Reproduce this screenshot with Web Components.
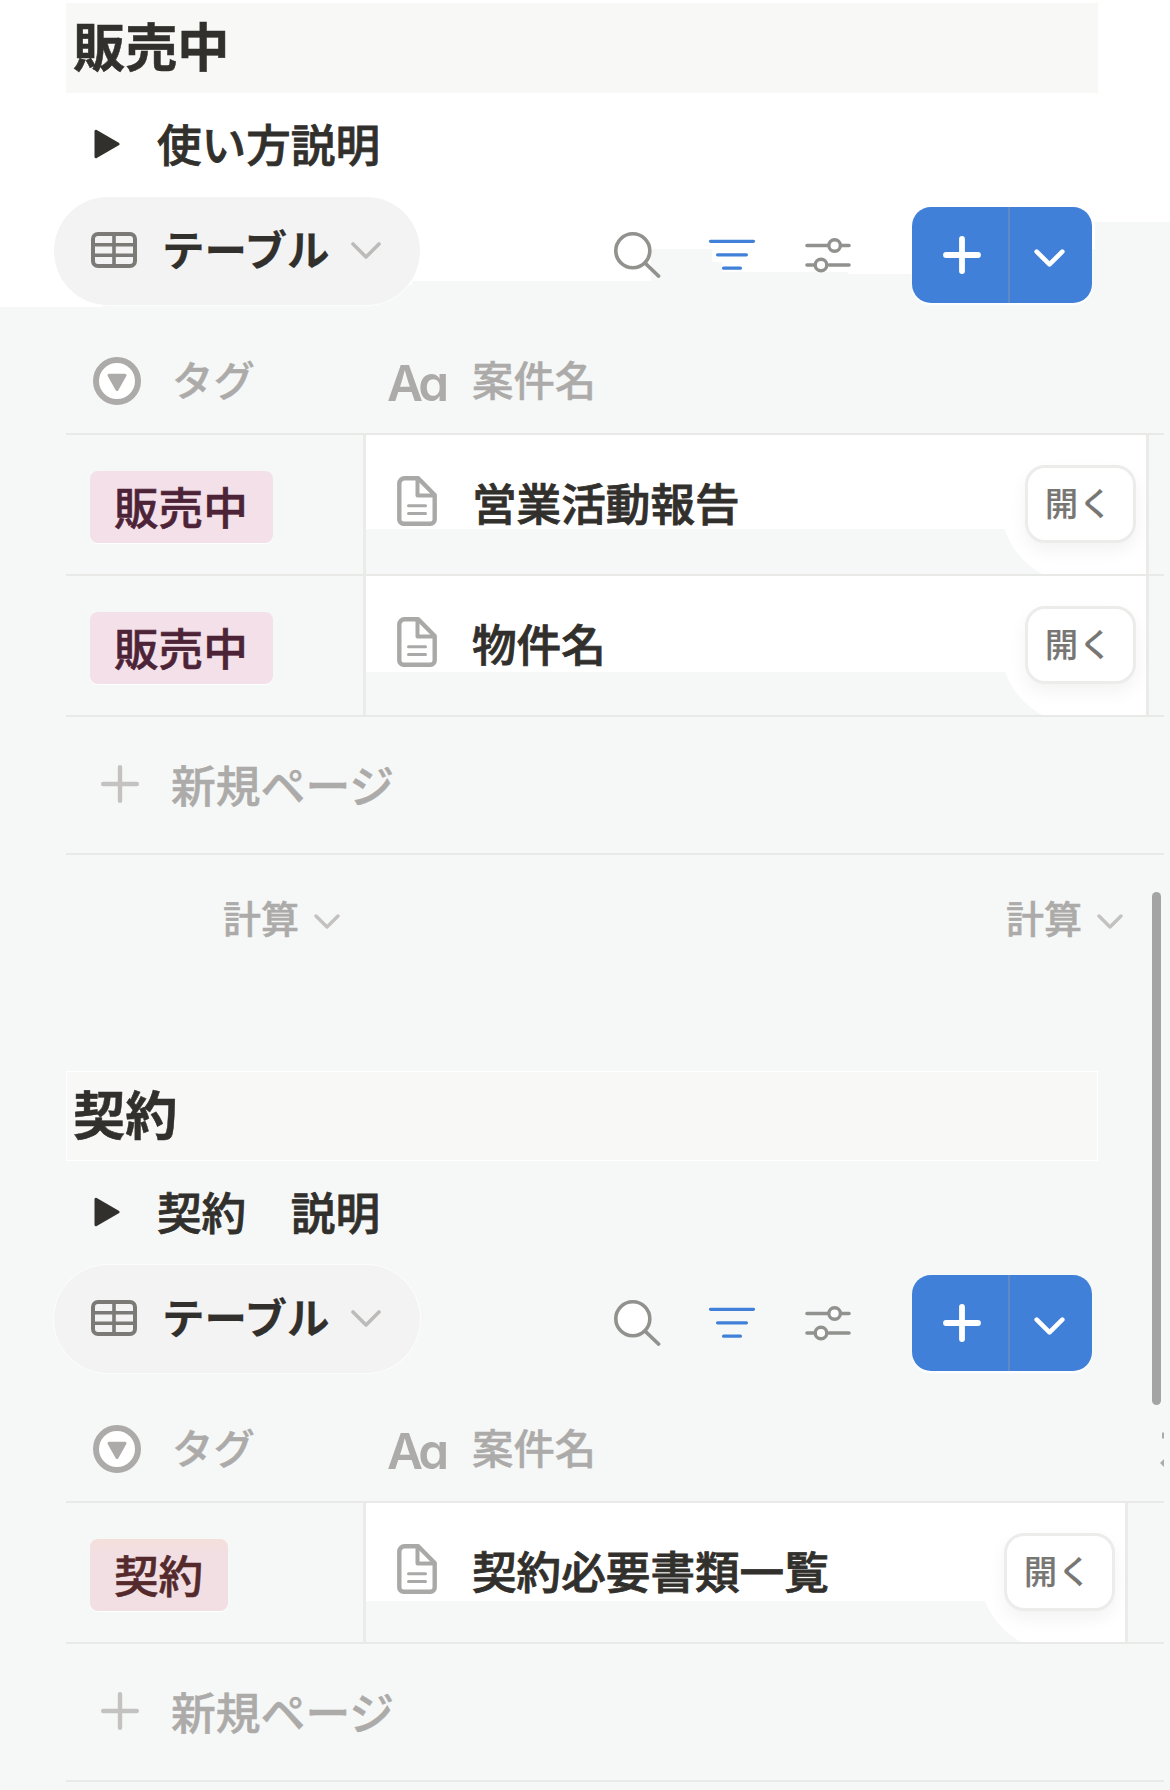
<!DOCTYPE html>
<html lang="ja">
<head>
<meta charset="utf-8">
<title>販売中</title>
<style>
  body {
    margin: 0;
    width: 1170px;
    height: 1790px;
    overflow: hidden;
    font-family: "Noto Sans CJK JP", sans-serif;
    color: #32302c;
    font-weight: 500;
    /* a weight between medium and bold */
    -webkit-text-stroke: 0.8px currentColor;
  }
</style>
</head>
<body>

<app-page>
  <page-section heading="販売中">
    <toggle-item>使い方説明</toggle-item>
    <view-bar>テーブル</view-bar>
    <table-head></table-head>
    <table-row page="営業活動報告" style="--lit: 94px"><tag-chip>販売中</tag-chip></table-row>
    <table-row page="物件名" style="--lit: 96px"><tag-chip>販売中</tag-chip></table-row>
    <new-row>新規ページ</new-row>
    <calc-row>計算</calc-row>
  </page-section>
  <page-section heading="契約" class="outlined" style="--cell: 765px">
    <toggle-item>契約　説明</toggle-item>
    <view-bar>テーブル</view-bar>
    <table-head more></table-head>
    <table-row page="契約必要書類一覧" style="--lit: 98px"><tag-chip color="red">契約</tag-chip></table-row>
    <new-row>新規ページ</new-row>
  </page-section>
</app-page>

<script>
const icons = {
  toggle: [26, 30, '<path d="M2 2.2v25.6L24 15z" fill="currentColor" stroke="currentColor" stroke-width="3" stroke-linejoin="round"/>'],
  table: [46, 36, '<rect x="2" y="2" width="42" height="32" rx="5" stroke-width="4"/><path d="M2 12.7h42M2 23.3h42M23 2v32" stroke-width="3.6"/>'],
  chevron: [30, 17, '<path d="M2 2l13 13L28 2" stroke-width="3.6" stroke-linecap="round" stroke-linejoin="round"/>'],
  chevronSmall: [26, 16, '<path d="M2 2l11 11L24 2" stroke-width="3.4" stroke-linecap="round" stroke-linejoin="round"/>'],
  chevronBold: [31, 18, '<path d="M2.7 2.7l12.8 12.6L28.3 2.7" stroke-width="4.6" stroke-linecap="round" stroke-linejoin="round"/>'],
  search: [47, 46, '<circle cx="18.8" cy="18.8" r="17" stroke-width="3.6" fill="#fff"/><path d="M31.5 31.5L44.5 44" stroke-width="3.8" stroke-linecap="round"/>'],
  filter: [46, 32, '<path d="M1.6 2.3h42.8M8.6 15.8h28.8M14.6 29.2h16.8" stroke-width="3.3" stroke-linecap="round"/>'],
  sliders: [46, 35, '<path d="M2 7.5h20M37 7.5h7M2 27h7M24 27h20" stroke-width="3.6" stroke-linecap="round"/><circle cx="29.6" cy="7.5" r="5.8" stroke-width="3.4" fill="#fff"/><circle cx="16" cy="27" r="5.8" stroke-width="3.4" fill="#fff"/>'],
  plusBold: [38, 38, '<path d="M19 3v32M3 19h32" stroke-width="5.8" stroke-linecap="round"/>'],
  plus: [38, 38, '<path d="M19 2.2v33.6M2.2 19h33.6" stroke-width="4.4" stroke-linecap="round"/>'],
  select: [48, 48, '<circle cx="24" cy="24" r="21" stroke-width="6" fill="#fff"/><path d="M16 18.2h16L24 32.5z" fill="currentColor" stroke="currentColor" stroke-width="3" stroke-linejoin="round"/>'],
  page: [40, 50, '<path d="M7.5 2.3h13.7L37.7 19v24.5a4.2 4.2 0 0 1-4.2 4.2H6.5a4.2 4.2 0 0 1-4.2-4.2V7.5A5.2 5.2 0 0 1 7.500 2.3z" stroke-width="4.4" stroke-linejoin="round"/><path d="M20.5 3v16.5h17" stroke-width="4" stroke-linejoin="round"/><path d="M11.5 29.8h17M11.5 37.6h17" stroke-width="3" stroke-linecap="round"/>'],
  // only the left edge of the next column's icon is in view
  next: [4, 36, '<path d="M2 1.5h3v6h-3z M0 32l4-4v8z" fill="currentColor" stroke="none"/>'],
};

function define(name, html) {
  const template = document.createElement('template');
  customElements.define(name, class extends HTMLElement {
    constructor() {
      super();
      this.attachShadow({ mode: 'open' });
      template.innerHTML = typeof html === 'function' ? html(this) : html;
      this.shadowRoot.appendChild(template.content.cloneNode(true));
    }
  });
}

define('ui-icon', el => {
  const [w, h, body] = icons[el.getAttribute('name')];
  return `
    <style>
      :host { display: block; flex: none; line-height: 0; }
      svg { display: block; overflow: hidden; }
    </style>
    <svg width="${w}" height="${h}" viewBox="0 0 ${w} ${h}" fill="none" stroke="currentColor">${body}</svg>`;
});

define('app-page', `
  <style>
    :host {
      display: block;
      position: relative;
      height: 1790px;
      overflow: hidden;
      background:
        linear-gradient(#fff, #fff) 0 0 / 1170px 222px,
        linear-gradient(#fff, #fff) 0 0 / 1095px 249px,
        linear-gradient(#fff, #fff) 0 0 / 103px 307px,
        linear-gradient(#fff, #fff) 0 0 / 412px 285px,
        linear-gradient(#fff, #fff) 0 0 / 651px 281px,
        linear-gradient(#fff, #fff) 712px 0 / 200px 262px,
        linear-gradient(#fff, #fff) 722px 0 / 126px 272px,
        linear-gradient(#fff, #fff) 848px 0 / 64px 274px,
        #f6f8f7;
      background-repeat: no-repeat;
    }
    .thumb {
      position: absolute;
      left: 1152px;
      top: 892px;
      width: 9px;
      height: 513px;
      border-radius: 5px;
      background: #a4a4a4;
    }
  </style>
  <slot></slot>
  <div class="thumb"></div>
`);

define('page-section', el => `
  <style>
    :host {
      display: block;
      box-sizing: border-box;
      height: 1068px;
      padding: 3px 6px 0 66px;
    }
    h2 {
      margin: 0;
      box-sizing: border-box;
      width: 1032px;
      height: 90px;
      padding-left: 7px;
      background: #f8f8f7;
      font-size: 52.2px;
      font-weight: 700;
      line-height: 82px;
      -webkit-text-stroke-width: 0.5px;
    }
    :host(.outlined) h2 { box-shadow: inset 0 0 0 1px #fff; }
  </style>
  <h2>${el.getAttribute('heading')}</h2>
  <slot></slot>
`);

define('toggle-item', `
  <style>
    :host {
      display: flex;
      align-items: center;
      height: 104px;
      padding-left: 28px;
      gap: 37px;
      font-size: 44.6px;
      line-height: 104px;
    }
    ui-icon { margin-top: -3px; }
    span { white-space: pre; margin-top: -4px; }
  </style>
  <ui-icon name="toggle"></ui-icon>
  <span><slot></slot></span>
`);

define('view-bar', `
  <style>
    :host {
      display: flex;
      height: 108px;
      margin-left: -12px;
    }
    .view {
      display: flex;
      align-items: center;
      box-sizing: border-box;
      width: 366px;
      padding-left: 37px;
      border-radius: 54px;
      background: #f3f3f3;
      box-shadow: 0 0 0 1px #fff9;
      font-size: 42.5px;
      font-weight: 600;
      line-height: 104px;
      color: #32302c;
      -webkit-text-stroke-width: 0.2px;
    }
    .view .grid { color: #7b7a77; margin-right: 25px; margin-top: -2px; }
    .view .down { color: #bcbbb9; margin-top: -1px; }
    .label { width: 189px; margin-top: -6px; white-space: nowrap; }
    .tools {
      display: flex;
      align-items: center;
      margin: 8px 0 0 194px;
      height: 100px;
      color: #91918e;
    }
    .tools > ui-icon { margin-right: 48px; }
    .tools .filter { color: #4080d8; margin-right: 50px; }
    .new {
      display: flex;
      width: 180px;
      height: 96px;
      margin: 10px 0 0 61px;
      border-radius: 19px;
      background: #4080d9;
      box-shadow: 0 2px 2px #fff;
      color: #fff;
    }
    .new div {
      box-sizing: border-box;
      display: flex;
      align-items: center;
      justify-content: center;
    }
    .add { width: 98px; border-right: 2px solid #6189c5; }
    .add ui-icon { margin: 0 0 0 4px; }
    .more { width: 82px; }
    .more ui-icon { margin: 6px 3px 0 0; }
  </style>
  <div class="view">
    <ui-icon class="grid" name="table"></ui-icon>
    <span class="label"><slot></slot></span>
    <ui-icon class="down" name="chevron"></ui-icon>
  </div>
  <div class="tools">
    <ui-icon name="search"></ui-icon>
    <ui-icon class="filter" name="filter"></ui-icon>
    <ui-icon name="sliders" style="margin-right: 0"></ui-icon>
  </div>
  <div class="new">
    <div class="add"><ui-icon name="plusBold"></ui-icon></div>
    <div class="more"><ui-icon name="chevronBold"></ui-icon></div>
  </div>
`);

define('table-head', el => `
  <style>
    :host {
      display: grid;
      grid-template-columns: 298px 1fr auto;
      box-sizing: border-box;
      height: 130px;
      padding-top: 23px;
      border-bottom: 2px solid #e9e9e7;
      font-size: 41.4px;
      color: #acaba9;
      line-height: 1;
      -webkit-text-stroke-width: 0.4px;
    }
    div { display: flex; align-items: center; }
    .tag { padding-left: 27px; }
    .tag ui-icon { margin-right: 31px; }
    .tag span, .name span { margin-top: -3px; }
    .name { padding-left: 23px; }
    .name .aa {
      width: 85px;
      margin-top: 6px;
      font: 600 49.5px/1 Inter, sans-serif;
      font-feature-settings: "cv11";
      letter-spacing: -4px;
      -webkit-text-stroke-width: 0;
    }
  </style>
  <div class="tag"><ui-icon name="select"></ui-icon><span>タグ</span></div>
  <div class="name"><span class="aa">Aa</span><span>案件名</span></div>
  ${el.hasAttribute('more') ? '<div><ui-icon name="next"></ui-icon></div>' : ''}
`);

define('tag-chip', `
  <style>
    :host {
      display: block;
      height: 72px;
      padding: 0 25px 0 24px;
      border-radius: 8px;
      background: #f4e0e9;
      box-shadow: 0 1px 1px #fff;
      color: #4c2337;
      font-size: 44.6px;
      line-height: 69px;
      white-space: nowrap;
      -webkit-text-stroke-width: 0.6px;
    }
    :host([color="red"]) {
      background: linear-gradient(#f5dfda, #f1dfe4 24%, #f1dfe4);
      color: #552a2c;
    }
  </style>
  <slot></slot>
`);

define('open-button', `
  <style>
    :host {
      box-sizing: border-box;
      display: flex;
      width: 111px;
      height: 78px;
      margin-top: -1px;
      padding-left: 17px;
      border: 3px solid #ececeb;
      border-radius: 20px;
      background: #fff;
      background-clip: padding-box;
      box-shadow: 0 8px 18px rgba(20, 20, 20, .05);
      color: #777673;
      font-size: 33px;
      letter-spacing: 1px;
      line-height: 68px;
      white-space: nowrap;
      -webkit-text-stroke-width: 0.2px;
    }
  </style>
  <slot></slot>
`);

define('table-row', el => `
  <style>
    :host {
      display: flex;
      box-sizing: border-box;
      height: 141px;
      border-bottom: 2px solid #e9e9e7;
    }
    .tag {
      display: flex;
      align-items: flex-start;
      box-sizing: border-box;
      width: 297px;
      padding: 36px 0 0 24px;
    }
    .page {
      display: flex;
      align-items: center;
      box-sizing: border-box;
      width: var(--cell, 786px);
      padding: 0 10px 0 31px;
      border: solid #ebebea;
      border-width: 0 3px;
      background:
        linear-gradient(#fff, #fff) 0 0 / 100% var(--lit),
        linear-gradient(#fff, #fff) 100% 0 / 92px 100%,
        radial-gradient(circle at calc(100% - 66px) 69px, #fff 79px, transparent 80px);
      background-repeat: no-repeat;
    }
    .icon { color: #a9a9a7; margin: -7px 35px 0 0; }
    .title {
      flex: 1;
      font-size: 44.6px;
      line-height: 130px;
      margin-top: -5px;
      white-space: nowrap;
    }
  </style>
  <div class="tag"><slot></slot></div>
  <div class="page">
    <ui-icon class="icon" name="page"></ui-icon>
    <span class="title">${el.getAttribute('page')}</span>
    <open-button>開く</open-button>
  </div>
`);

define('new-row', `
  <style>
    :host {
      display: flex;
      align-items: center;
      box-sizing: border-box;
      height: 138px;
      padding-left: 35px;
      gap: 32px;
      border-bottom: 2px solid #e9e9e7;
      font-size: 44.8px;
      line-height: 1;
      color: #acaba9;
      -webkit-text-stroke-width: 0.5px;
    }
    ui-icon { color: #c3c2c0; margin-top: -2px; }
    span { margin-top: -1px; }
  </style>
  <ui-icon name="plus"></ui-icon>
  <span><slot></slot></span>
`);

define('calc-row', el => `
  <style>
    :host {
      display: grid;
      grid-template-columns: 274px 783px;
      height: 128px;
      font-size: 38px;
      line-height: 1;
      color: #acaba9;
      -webkit-text-stroke-width: 0.5px;
    }
    div {
      display: flex;
      align-items: center;
      justify-content: flex-end;
      gap: 15px;
    }
    span { margin-top: -5px; }
    ui-icon { color: #c3c2c0; margin-top: 5px; }
  </style>
  <div><span>${el.textContent}</span><ui-icon name="chevronSmall"></ui-icon></div>
  <div><span>${el.textContent}</span><ui-icon name="chevronSmall"></ui-icon></div>
`);
</script>
</body>
</html>
